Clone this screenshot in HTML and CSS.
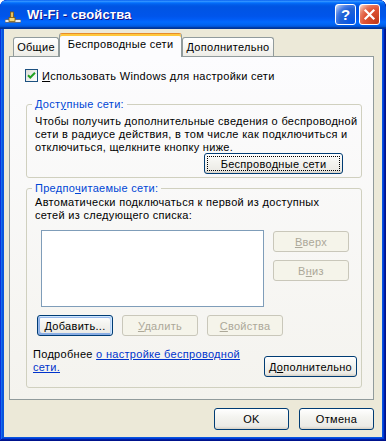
FILE: index.html
```html
<!DOCTYPE html>
<html lang="ru">
<head>
<meta charset="utf-8">
<title>Wi-Fi - свойства</title>
<link rel="stylesheet" href="styles.css">
</head>
<body>
<div class="window">
  <div class="titlebar">
    <svg class="title-icon" width="16" height="16" viewBox="0 0 16 16">
      <rect x="0" y="11.5" width="16" height="3" fill="#EDEDED" stroke="#4A5A7A" stroke-width="0.8"/>
      <rect x="5.5" y="4" width="3" height="8" fill="#E8C060" stroke="#7A5A10" stroke-width="0.8"/>
      <rect x="4" y="9.5" width="6" height="4" fill="#F5D878" stroke="#7A5A10" stroke-width="0.8"/>
    </svg>
    <span class="title-text">Wi-Fi - свойства</span>
    <div class="title-buttons">
      <span class="tb-btn help">?</span>
      <span class="tb-btn close">
        <svg width="19" height="19" viewBox="0 0 19 19"><path d="M5.5 5.5 L13.5 13.5 M13.5 5.5 L5.5 13.5" stroke="#fff" stroke-width="2.2" stroke-linecap="square"/></svg>
      </span>
    </div>
  </div>
  <div class="client">
    <div class="tabs">
      <div class="tab tab-general">Общие</div>
      <div class="tab tab-active">Беспроводные сети</div>
      <div class="tab tab-extra">Дополнительно</div>
    </div>
    <div class="panel">
      <div class="check-row">
        <span class="checkbox">
          <svg width="11" height="11" viewBox="0 0 11 11"><path d="M2 5.2 L4.3 7.5 L9 2.8" fill="none" stroke="#21A121" stroke-width="2"/></svg>
        </span>
        <span><u>И</u>спользовать Windows для настройки сети</span>
      </div>
      <fieldset class="group group-available">
        <legend>Дост<u>у</u>пные сети:</legend>
        <p class="desc">Чтобы получить дополнительные сведения о беспроводной<br>сети в радиусе действия, в том числе как подключиться и<br>отключиться, щелкните кнопку ниже.</p>
        <div class="row-end">
          <button class="btn btn-wide btn-focus">Беспроводные сети</button>
        </div>
      </fieldset>
      <fieldset class="group group-preferred">
        <legend>Предпо<u>ч</u>итаемые сети:</legend>
        <p class="desc">Автоматически подключаться к первой из доступных<br>сетей из следующего списка:</p>
        <div class="list-row">
          <div class="listbox"></div>
          <div class="side-buttons">
            <button class="btn btn-disabled"><u>В</u>верх</button>
            <button class="btn btn-disabled">В<u>н</u>из</button>
          </div>
        </div>
        <div class="btn-row">
          <button class="btn btn-default"><u>Д</u>обавить...</button>
          <button class="btn btn-disabled"><u>У</u>далить</button>
          <button class="btn btn-disabled"><u>С</u>войства</button>
        </div>
        <div class="info-row">
          <p class="info">Подробнее <a href="#" class="link">о настройке беспроводной<br>сети.</a></p>
          <button class="btn btn-extra">Д<u>о</u>полнительно</button>
        </div>
      </fieldset>
    </div>
    <div class="footer">
      <button class="btn btn-footer">OK</button>
      <button class="btn btn-footer">Отмена</button>
    </div>
  </div>
</div>
</body>
</html>
```

FILE: styles.css
```css
html, body {
  margin: 0;
  padding: 0;
  background: #ffffff;
}

body {
  font-family: "Liberation Sans", Arial, sans-serif;
  font-size: 11px;
  letter-spacing: 0.3px;
  color: #000000;
}

.window {
  width: 386px;
  height: 441px;
  box-sizing: border-box;
  display: flex;
  flex-direction: column;
  background: #0855DD;
  border-radius: 7px 7px 0 0;
  overflow: hidden;
  box-shadow: inset -1px -1px #00138C, inset 1px 1px #0831D9, inset -2px -2px #001EA0, inset 2px 2px #166AEE, inset -3px -3px #003BDA, inset 3px 3px #0855DD;
}

/* ---------- title bar ---------- */
.titlebar {
  height: 29px;
  flex: none;
  display: flex;
  align-items: center;
  padding: 0 6px 0 5px;
  border-radius: 7px 7px 0 0;
  background: linear-gradient(180deg, #0058EE 0%, #3593FF 4%, #288EFF 6%, #127DFF 8%, #036FFC 10%, #0262EE 14%, #0057E5 20%, #0054E3 24%, #0055EB 56%, #005BF5 66%, #026AFE 76%, #0062EF 86%, #0052D6 92%, #0040AB 94%, #003092 100%);
}

.title-icon {
  flex: none;
  margin-top: 2px;
}

.title-text {
  margin-left: 6px;
  color: #ffffff;
  font-family: "Liberation Sans", Arial, sans-serif;
  font-weight: bold;
  font-size: 13px;
  letter-spacing: 0.1px;
  text-shadow: 1px 1px #0F1089;
}

.title-buttons {
  margin-left: auto;
  display: flex;
  gap: 3px;
}

.tb-btn {
  width: 21px;
  height: 21px;
  box-sizing: border-box;
  border: 1px solid #ffffff;
  border-radius: 3px;
  display: flex;
  align-items: center;
  justify-content: center;
  color: #ffffff;
  letter-spacing: 0;
}

.help {
  background: radial-gradient(circle at 90% 90%, #0054E9 0%, #2263D5 55%, #4479E4 70%, #A3BBEC 90%, #ffffff 100%);
  font-family: "Liberation Sans", Arial, sans-serif;
  font-weight: bold;
  font-size: 15px;
}

.close {
  background: radial-gradient(circle at 90% 90%, #C23A1A 0%, #DF5435 55%, #E6755A 72%, #F4B9A6 90%, #ffffff 100%);
}

/* ---------- client ---------- */
.client {
  flex: 1;
  margin: 0 4px 4px;
  background: #ECE9D8;
  padding: 4px 8px 0 5px;
}

.tabs {
  height: 23px;
  display: flex;
  align-items: flex-end;
  padding-left: 4px;
}

.tab {
  height: 19px;
  box-sizing: border-box;
  border: 1px solid #919B9C;
  border-bottom: none;
  border-radius: 3px 3px 0 0;
  background: linear-gradient(180deg, #FFFFFF 0%, #F7F7F4 50%, #EDECE6 100%);
  display: flex;
  align-items: center;
  justify-content: center;
}

.tab-general {
  width: 46px;
}

.tab-extra {
  width: 92px;
}

.tab-active {
  width: 123px;
  height: 24px;
  margin-bottom: -1px;
  position: relative;
  z-index: 1;
  padding-bottom: 3px;
  border-top-color: #E68B2C;
  background: #FCFCFE;
  box-shadow: inset 0 2px 0 #FFC83C;
}

.panel {
  height: 344px;
  box-sizing: border-box;
  border: 1px solid #919B9C;
  background: linear-gradient(180deg, #FCFCFE 0%, #F4F3EE 100%);
  padding: 12px 11px 0 16px;
}

.check-row {
  display: flex;
  align-items: center;
  height: 13px;
  margin-left: -1px;
  white-space: nowrap;
}

.checkbox {
  width: 13px;
  height: 13px;
  box-sizing: border-box;
  border: 1px solid #1C5180;
  background: linear-gradient(135deg, #DCDCD7 0%, #FFFFFF 100%);
  margin-right: 4px;
  display: flex;
}

/* ---------- group boxes ---------- */
.group {
  margin: 0;
  border: 1px solid #D0D0BF;
  border-radius: 3px;
  min-width: 0;
}

.group legend {
  padding: 0 3px;
  margin-left: -3px;
  line-height: 13px;
  color: #0046D5;
}

.group-available {
  margin-top: 16px;
  padding: 4px 4px 3px 8px;
}

.group-preferred {
  margin-top: 4px;
  padding: 1px 4px 10px 8px;
}

.desc {
  margin: 0;
  line-height: 13px;
  white-space: nowrap;
}

.row-end {
  display: flex;
  justify-content: flex-end;
  margin-top: -1px;
  padding-right: 14px;
}

.list-row {
  display: flex;
  margin-top: 8px;
}

.listbox {
  width: 223px;
  height: 77px;
  box-sizing: border-box;
  margin-left: 6px;
  border: 1px solid #7F9DB9;
  background: #ffffff;
}

.side-buttons {
  display: flex;
  flex-direction: column;
  gap: 8px;
  margin-left: 9px;
  margin-top: 1px;
}

.btn-row {
  display: flex;
  gap: 9px;
  margin-top: 8px;
  margin-left: 2px;
}

.info-row {
  display: flex;
  margin-top: 12px;
  margin-left: -2px;
}

.info {
  margin: 0;
  line-height: 13px;
  white-space: nowrap;
}

.link {
  color: #0033CC;
  text-decoration: underline;
}

/* ---------- buttons ---------- */
.btn {
  width: 76px;
  height: 21px;
  box-sizing: border-box;
  padding: 0;
  font-family: inherit;
  font-size: 11px;
  letter-spacing: inherit;
  white-space: nowrap;
  color: #000000;
  border: 1px solid #003C74;
  border-radius: 3px;
  background: linear-gradient(180deg, #FFFFFF 0%, #F4F4F0 40%, #ECEBE6 86%, #D6D0C5 100%);
}

.btn-wide {
  width: 139px;
}

.btn-focus {
  outline: 1px dotted #000000;
  outline-offset: -4px;
}

.btn-default {
  box-shadow: inset -1px 1px #CEE7FF, inset 1px 2px #98B8EA, inset -2px 2px #BCD4F6, inset 1px -1px #89ADE4, inset 2px -2px #89ADE4;
}

.btn-disabled {
  color: #ACA899;
  border-color: #C9C7BA;
  background: #F5F4EA;
}

.btn-extra {
  width: 93px;
  margin-left: auto;
  margin-top: 8px;
}

.footer {
  display: flex;
  justify-content: flex-end;
  gap: 10px;
  margin-top: 8px;
}

.btn-footer {
  width: 75px;
  height: 22px;
}
```
